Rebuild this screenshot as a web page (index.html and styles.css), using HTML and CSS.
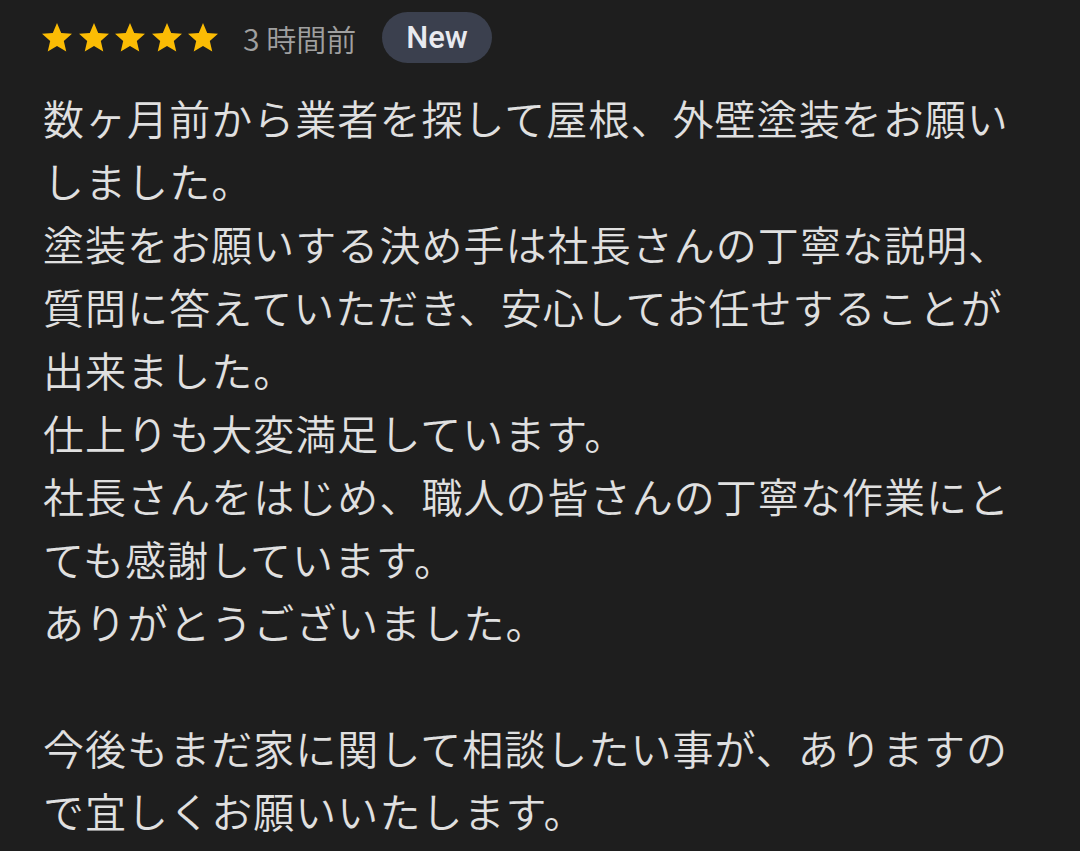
FILE: index.html
```html
<!DOCTYPE html>
<html lang="ja">
<head>
<meta charset="utf-8">
<link rel="stylesheet" href="styles.css">
</head>
<body>
<div class="review">
  <div class="meta">
    <div class="stars">
      <svg class="star" viewBox="0 0 24 24"><path d="M12 17.27L18.18 21l-1.64-7.03L22 9.24l-7.19-.61L12 2 9.19 8.63 2 9.24l5.46 4.73L5.82 21z"/></svg>
      <svg class="star" viewBox="0 0 24 24"><path d="M12 17.27L18.18 21l-1.64-7.03L22 9.24l-7.19-.61L12 2 9.19 8.63 2 9.24l5.46 4.73L5.82 21z"/></svg>
      <svg class="star" viewBox="0 0 24 24"><path d="M12 17.27L18.18 21l-1.64-7.03L22 9.24l-7.19-.61L12 2 9.19 8.63 2 9.24l5.46 4.73L5.82 21z"/></svg>
      <svg class="star" viewBox="0 0 24 24"><path d="M12 17.27L18.18 21l-1.64-7.03L22 9.24l-7.19-.61L12 2 9.19 8.63 2 9.24l5.46 4.73L5.82 21z"/></svg>
      <svg class="star" viewBox="0 0 24 24"><path d="M12 17.27L18.18 21l-1.64-7.03L22 9.24l-7.19-.61L12 2 9.19 8.63 2 9.24l5.46 4.73L5.82 21z"/></svg>
    </div>
    <span class="time">3 時間前</span>
    <span class="badge">New</span>
  </div>
  <p class="text">数ヶ月前から業者を探して屋根、外壁塗装をお願い<br>しました。<br>塗装をお願いする決め手は社長さんの丁寧な説明、<br>質問に答えていただき、安心してお任せすることが<br>出来ました。<br>仕上りも大変満足しています。<br>社長さんをはじめ、職人の皆さんの丁寧な作業にと<br>ても感謝しています。<br>ありがとうございました。<br><br>今後もまだ家に関して相談したい事が、ありますの<br>で宜しくお願いいたします。</p>
</div>
</body>
</html>
```
FILE: styles.css
```css
html, body {
  margin: 0;
  padding: 0;
  background: #1e1e1e;
}
body {
  width: 1080px;
  height: 851px;
  overflow: hidden;
  font-family: "Noto Sans CJK JP", "Noto Sans", sans-serif;
}
.review {
  padding: 12px 0 0 43px;
}
.meta {
  display: flex;
  align-items: center;
  height: 51px;
}
.stars {
  display: flex;
  margin-left: -4px;
  gap: 0.5px;
}
.star {
  width: 36px;
  height: 36px;
  fill: #fbbc04;
  display: block;
}
.time {
  margin-left: 22px;
  font-family: "Noto Sans CJK JP", sans-serif;
  font-size: 30px;
  font-weight: 350;
  color: #a0a0a0;
}
.badge {
  margin-left: 26px;
  height: 51px;
  padding: 0 24px;
  border-radius: 26px;
  background: #3b404e;
  color: #e8eaf0;
  font-family: "Roboto", "Noto Sans", sans-serif;
  font-weight: 500;
  font-size: 31px;
  display: flex;
  align-items: center;
}
.text {
  margin: 23px 0 0 0;
  font-size: 41px;
  font-weight: 350;
  line-height: 63px;
  letter-spacing: 1.05px;
  color: #e0e0e0;
  white-space: nowrap;
}
```
